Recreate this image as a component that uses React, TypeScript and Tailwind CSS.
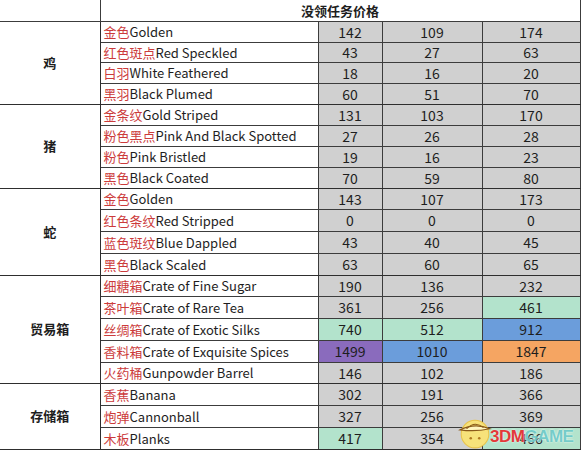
const font = { fontFamily: '"Noto Sans CJK SC", "Noto Sans", sans-serif' };

type Cell = { v: number; c?: string };
type Row = { cn: string; en: string; h: string; vals: Cell[] };
type Group = { name: string; rows: Row[] };

const g = (v: number, c?: string): Cell => ({ v, c });

const GREEN = "bg-[#b3e3cc]";
const BLUE = "bg-[#6b9ddb]";
const PURPLE = "bg-[#8a6bbd]";
const ORANGE = "bg-[#f5a562]";

const groups: Group[] = [
  {
    name: "鸡",
    rows: [
      { cn: "金色", en: "Golden", h: "h-[21px]", vals: [g(142), g(109), g(174)] },
      { cn: "红色斑点", en: "Red Speckled", h: "h-[20px]", vals: [g(43), g(27), g(63)] },
      { cn: "白羽", en: "White Feathered", h: "h-[21px]", vals: [g(18), g(16), g(20)] },
      { cn: "黑羽", en: "Black Plumed", h: "h-[21px]", vals: [g(60), g(51), g(70)] },
    ],
  },
  {
    name: "猪",
    rows: [
      { cn: "金条纹", en: "Gold Striped", h: "h-[21px]", vals: [g(131), g(103), g(170)] },
      { cn: "粉色黑点", en: "Pink And Black Spotted", h: "h-[21px]", vals: [g(27), g(26), g(28)] },
      { cn: "粉色", en: "Pink Bristled", h: "h-[21px]", vals: [g(19), g(16), g(23)] },
      { cn: "黑色", en: "Black Coated", h: "h-[21px]", vals: [g(70), g(59), g(80)] },
    ],
  },
  {
    name: "蛇",
    rows: [
      { cn: "金色", en: "Golden", h: "h-[21px]", vals: [g(143), g(107), g(173)] },
      { cn: "红色条纹", en: "Red Stripped", h: "h-[22px]", vals: [g(0), g(0), g(0)] },
      { cn: "蓝色斑纹", en: "Blue Dappled", h: "h-[22px]", vals: [g(43), g(40), g(45)] },
      { cn: "黑色", en: "Black Scaled", h: "h-[22px]", vals: [g(63), g(60), g(65)] },
    ],
  },
  {
    name: "贸易箱",
    rows: [
      { cn: "细糖箱", en: "Crate of Fine Sugar", h: "h-[21px]", vals: [g(190), g(136), g(232)] },
      { cn: "茶叶箱", en: "Crate of Rare Tea", h: "h-[22px]", vals: [g(361), g(256), g(461, GREEN)] },
      { cn: "丝绸箱", en: "Crate of Exotic Silks", h: "h-[22px]", vals: [g(740, GREEN), g(512, GREEN), g(912, BLUE)] },
      { cn: "香料箱", en: "Crate of Exquisite Spices", h: "h-[22px]", vals: [g(1499, PURPLE), g(1010, BLUE), g(1847, ORANGE)] },
      { cn: "火药桶", en: "Gunpowder Barrel", h: "h-[21px]", vals: [g(146), g(102), g(186)] },
    ],
  },
  {
    name: "存储箱",
    rows: [
      { cn: "香蕉", en: "Banana", h: "h-[22px]", vals: [g(302), g(191), g(366)] },
      { cn: "炮弹", en: "Cannonball", h: "h-[22px]", vals: [g(327), g(256), g(369)] },
      { cn: "木板", en: "Planks", h: "h-[22px]", vals: [g(417, GREEN), g(354), g(466, GREEN)] },
    ],
  },
];

// site watermark, sits over the bottom-right cells
function Watermark() {
  return (
    <div className="absolute left-[458px] top-[416px] flex items-end pointer-events-none">
      <svg width="34" height="34" viewBox="0 0 32 32">
        <circle cx="16" cy="17" r="13" fill="#f7e27a" stroke="#e9c44a" strokeWidth="1" />
        <path d="M2 13 Q16 6 30 12 Q16 15 2 13 Z" fill="#fff6c0" stroke="#8a5a1a" strokeWidth="1.2" />
        <path d="M8 12 Q16 4 24 11" fill="none" stroke="#8a5a1a" strokeWidth="1" />
        <circle cx="12" cy="21" r="1.2" fill="#b07a20" />
        <circle cx="20" cy="21" r="1.2" fill="#b07a20" />
      </svg>
      <div
        className="flex text-[17px] font-bold leading-[20px] tracking-[-0.5px] -ml-[2px] mb-[3px]"
        style={{ fontFamily: '"Liberation Sans", sans-serif' }}
      >
        <span className="text-[#e23a3a] [text-shadow:0_0_2px_#fff]">3DM</span>
        <span className="text-[#5fc4c2]/85 [text-shadow:0_0_2px_#fff]">GAME</span>
      </div>
    </div>
  );
}

export default function App() {
  return (
    <div className="relative w-[582px] h-[450px] bg-white overflow-hidden" style={font}>
      <table className="border-collapse table-fixed w-[580px] text-[13px] text-[#1e1e1e]">
        <colgroup>
          <col className="w-[100px]" />
          <col className="w-[218px]" />
          <col className="w-[64px]" />
          <col className="w-[100px]" />
          <col className="w-[98px]" />
        </colgroup>
        <tbody>
          <tr className="h-[21px]">
            <td className="border-r border-b border-[#3c3c3c]" />
            <td colSpan={4} className="border-b border-r border-[#3c3c3c] text-center font-bold leading-none">
              没领任务价格
            </td>
          </tr>
          {groups.map((grp) =>
            grp.rows.map((r, i) => (
              <tr key={grp.name + r.en} className={r.h}>
                {i === 0 && (
                  <td rowSpan={grp.rows.length} className="border-r border-b border-[#2e2e2e] text-center font-bold text-[13px]">
                    {grp.name}
                  </td>
                )}
                <td className={`border-r border-[#3c3c3c] pl-[3px] leading-none whitespace-nowrap ${i === grp.rows.length - 1 ? "border-b border-b-[#2e2e2e]" : "border-b"}`}>
                  <span className="text-[#cc3b3b]">{r.cn}</span>
                  {r.en}
                </td>
                {r.vals.map((c, j) => (
                  <td
                    key={j}
                    className={`border-r border-[#3c3c3c] text-center leading-none text-[14px] ${c.c ?? "bg-[#d0d0d0]"} ${i === grp.rows.length - 1 ? "border-b border-b-[#2e2e2e]" : "border-b"}`}
                  >
                    {c.v}
                  </td>
                ))}
              </tr>
            ))
          )}
        </tbody>
      </table>
      <Watermark />
    </div>
  );
}
